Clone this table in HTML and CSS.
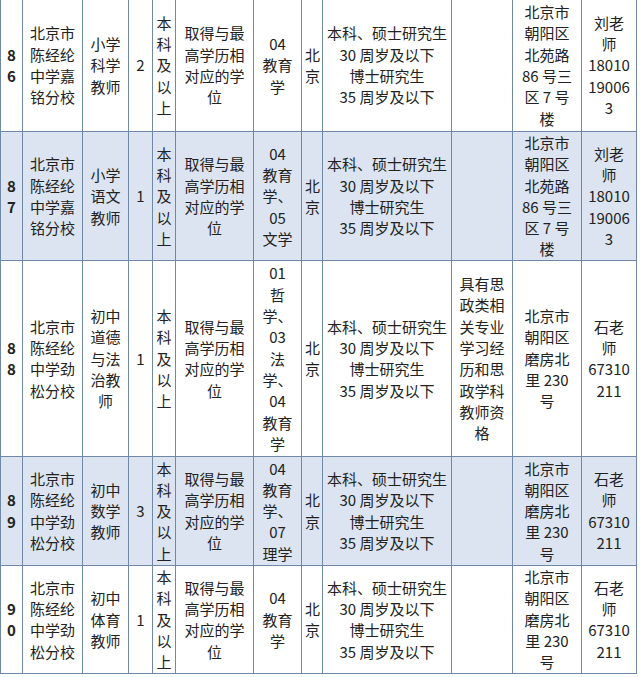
FILE: index.html
```html
<!DOCTYPE html>
<html lang="zh-CN">
<head>
<meta charset="utf-8">
<title>招聘岗位表</title>
<link rel="stylesheet" href="styles.css">
</head>
<body>
<table class="jobs">
  <colgroup>
    <col class="c-no"><col class="c-school"><col class="c-post"><col class="c-num"><col class="c-edu"><col class="c-degree"><col class="c-major"><col class="c-city"><col class="c-age"><col class="c-other"><col class="c-addr"><col class="c-contact">
  </colgroup>
  <tbody>
    <tr class="row r86">
      <td class="no">8<br>6</td>
      <td>北京市<br>陈经纶<br>中学嘉<br>铭分校</td>
      <td>小学<br>科学<br>教师</td>
      <td>2</td>
      <td>本<br>科<br>及<br>以<br>上</td>
      <td>取得与最<br>高学历相<br>对应的学<br>位</td>
      <td>04<br>教育<br>学</td>
      <td class="city">北<br>京</td>
      <td>本科、硕士研究生<br>30 周岁及以下<br>博士研究生<br>35 周岁及以下</td>
      <td></td>
      <td>北京市<br>朝阳区<br>北苑路<br>86 号三<br>区 7 号<br>楼</td>
      <td>刘老<br>师<br>18010<br>19006<br>3</td>
    </tr>
    <tr class="row r87 alt">
      <td class="no">8<br>7</td>
      <td>北京市<br>陈经纶<br>中学嘉<br>铭分校</td>
      <td>小学<br>语文<br>教师</td>
      <td>1</td>
      <td>本<br>科<br>及<br>以<br>上</td>
      <td>取得与最<br>高学历相<br>对应的学<br>位</td>
      <td>04<br>教育<br>学、<br>05<br>文学</td>
      <td class="city">北<br>京</td>
      <td>本科、硕士研究生<br>30 周岁及以下<br>博士研究生<br>35 周岁及以下</td>
      <td></td>
      <td>北京市<br>朝阳区<br>北苑路<br>86 号三<br>区 7 号<br>楼</td>
      <td>刘老<br>师<br>18010<br>19006<br>3</td>
    </tr>
    <tr class="row r88">
      <td class="no">8<br>8</td>
      <td>北京市<br>陈经纶<br>中学劲<br>松分校</td>
      <td>初中<br>道德<br>与法<br>治教<br>师</td>
      <td>1</td>
      <td>本<br>科<br>及<br>以<br>上</td>
      <td>取得与最<br>高学历相<br>对应的学<br>位</td>
      <td>01<br>哲<br>学、<br>03<br>法<br>学、<br>04<br>教育<br>学</td>
      <td class="city">北<br>京</td>
      <td>本科、硕士研究生<br>30 周岁及以下<br>博士研究生<br>35 周岁及以下</td>
      <td>具有思<br>政类相<br>关专业<br>学习经<br>历和思<br>政学科<br>教师资<br>格</td>
      <td>北京市<br>朝阳区<br>磨房北<br>里 230<br>号</td>
      <td>石老<br>师<br>67310<br>211</td>
    </tr>
    <tr class="row r89 alt">
      <td class="no">8<br>9</td>
      <td>北京市<br>陈经纶<br>中学劲<br>松分校</td>
      <td>初中<br>数学<br>教师</td>
      <td>3</td>
      <td>本<br>科<br>及<br>以<br>上</td>
      <td>取得与最<br>高学历相<br>对应的学<br>位</td>
      <td>04<br>教育<br>学、<br>07<br>理学</td>
      <td class="city">北<br>京</td>
      <td>本科、硕士研究生<br>30 周岁及以下<br>博士研究生<br>35 周岁及以下</td>
      <td></td>
      <td>北京市<br>朝阳区<br>磨房北<br>里 230<br>号</td>
      <td>石老<br>师<br>67310<br>211</td>
    </tr>
    <tr class="row r90">
      <td class="no">9<br>0</td>
      <td>北京市<br>陈经纶<br>中学劲<br>松分校</td>
      <td>初中<br>体育<br>教师</td>
      <td>1</td>
      <td>本<br>科<br>及<br>以<br>上</td>
      <td>取得与最<br>高学历相<br>对应的学<br>位</td>
      <td>04<br>教育<br>学</td>
      <td class="city">北<br>京</td>
      <td>本科、硕士研究生<br>30 周岁及以下<br>博士研究生<br>35 周岁及以下</td>
      <td></td>
      <td>北京市<br>朝阳区<br>磨房北<br>里 230<br>号</td>
      <td>石老<br>师<br>67310<br>211</td>
    </tr>
  </tbody>
</table>
</body>
</html>
```

FILE: styles.css
```css
html, body {
  margin: 0;
  padding: 0;
  background: #ffffff;
}

body {
  width: 640px;
  height: 677px;
  overflow: hidden;
  font-family: "Noto Sans CJK SC", "Noto Sans", sans-serif;
  color: #222222;
}

.jobs {
  border-collapse: collapse;
  table-layout: fixed;
  width: 637px;
  margin-top: -2px;
  font-size: 15px;
  line-height: 21.3px;
}

.c-no { width: 22px; }
.c-school { width: 60px; }
.c-post { width: 46px; }
.c-num { width: 24px; }
.c-edu { width: 23px; }
.c-degree { width: 78px; }
.c-major { width: 48px; }
.c-city { width: 21px; }
.c-age { width: 129px; }
.c-other { width: 61px; }
.c-addr { width: 69px; }
.c-contact { width: 55px; }

.jobs td {
  border: 1px solid #6f88a8;
  padding: 0;
  text-align: center;
  vertical-align: middle;
  white-space: nowrap;
  overflow: hidden;
}

.row { background: #ffffff; }
.row.alt { background: #dbe4f0; }

.r86 { height: 133px; }
.r87 { height: 128px; }
.r88 { height: 196px; }
.r89 { height: 109px; }
.r90 { height: 108px; }

.jobs td.no {
  font-weight: 700;
}

.jobs td.city {
  text-align: left;
  padding-left: 3px;
}
```
